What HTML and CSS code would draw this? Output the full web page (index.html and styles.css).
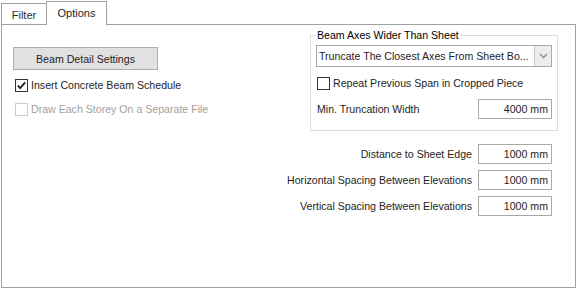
FILE: index.html
```html
<!DOCTYPE html>
<html lang="en">
<head>
  <meta charset="UTF-8" />
  <meta name="viewport" content="width=device-width, initial-scale=1.0"/>
  <title>Options</title>
  <link rel="stylesheet" href="styles.css">
</head>
<body>

  <div class="window">
    <div class="tabs">
      <div class="tab">Filter</div>
      <div class="tab active">Options</div>
    </div>

    <div class="panel">
      <div class="top">
        <div class="left-col">
          <button class="btn">Beam Detail Settings</button>
          <label class="check">
            <span class="box checked">
              <svg width="11" height="11" viewBox="0 0 11 11"><path d="M1.8 5.6 L4.2 8.2 L9.2 2.4" fill="none" stroke="#222" stroke-width="1.8"/></svg>
            </span>
            Insert Concrete Beam Schedule
          </label>
          <label class="check disabled">
            <span class="box"></span>
            Draw Each Storey On a Separate File
          </label>
        </div>

        <fieldset class="group">
          <legend>Beam Axes Wider Than Sheet</legend>
          <div class="select">
            <span class="select-text">Truncate The Closest Axes From Sheet Bo...</span>
            <span class="select-btn">
              <svg width="9" height="6" viewBox="0 0 9 6"><path d="M1 1 L4.5 4.5 L8 1" fill="none" stroke="#8a8a8a" stroke-width="1.4"/></svg>
            </span>
          </div>
          <label class="check">
            <span class="box"></span>
            Repeat Previous Span in Cropped Piece
          </label>
          <div class="row">
            <span>Min. Truncation Width</span>
            <span class="field">4000 mm</span>
          </div>
        </fieldset>
      </div>

      <div class="fields">
        <span class="label">Distance to Sheet Edge</span>
        <span class="field">1000 mm</span>
        <span class="label">Horizontal Spacing Between Elevations</span>
        <span class="field">1000 mm</span>
        <span class="label">Vertical Spacing Between Elevations</span>
        <span class="field">1000 mm</span>
      </div>
    </div>
  </div>

</body>
</html>
```

FILE: styles.css
```css
* {
  box-sizing: border-box;
}
body {
  margin: 0;
  background: #fff;
  font-family: 'Liberation Sans', Arial, sans-serif;
  font-size: 10.6px;
  color: #1e1e1e;
}

.window {
  margin-left: 1px;
  width: 575px;
}

/* Tabs */
.tabs {
  display: flex;
  align-items: flex-end;
  height: 24px;
}
.tab {
  height: 21px;
  width: 46px;
  border: 1px solid #a0a0a0;
  border-bottom: none;
  font-size: 11px;
  color: #2b2b3a;
  display: flex;
  align-items: center;
  justify-content: center;
  padding-top: 1px;
}
.tab.active {
  width: 61px;
  height: 24px;
  margin-left: -1px;
  margin-bottom: -1px;
  background: #fff;
  position: relative;
  z-index: 1;
  padding-top: 0;
  padding-bottom: 1px;
  color: #1e1e1e;
}

.panel {
  height: 264px;
  border: 1px solid #a0a0a0;
}

.top {
  display: flex;
  justify-content: space-between;
  align-items: flex-start;
  padding-top: 3px;
}

.left-col {
  padding-left: 11px;
  padding-top: 19px;
}
.btn {
  display: block;
  width: 145px;
  height: 23px;
  margin: 0 0 3px 0;
  padding: 0;
  background: #e1e1e1;
  border: 1px solid #adadad;
  font-family: inherit;
  font-size: 10.6px;
  color: #1e1e1e;
}
.left-col .check {
  margin-left: 2px;
}

.check {
  display: flex;
  align-items: center;
  height: 24px;
  gap: 3px;
}
.box {
  width: 13px;
  height: 13px;
  border: 1px solid #333;
  background: #fff;
  display: flex;
  align-items: center;
  justify-content: center;
}
.check.disabled {
  color: #a0a0a0;
}
.check.disabled .box {
  border-color: #cccccc;
}

/* Group box */
.group {
  width: 248px;
  margin: 0 17px 0 0;
  padding: 0 5px 11px 5px;
  border: 1px solid #dcdcdc;
}
.group legend {
  padding: 0 1px;
  line-height: 14px;
  color: #000;
}
.select {
  display: flex;
  height: 22px;
  margin-top: 3px;
  border: 1px solid #a9a9a9;
}
.select-text {
  flex: 1;
  padding-left: 2px;
  display: flex;
  align-items: center;
  white-space: nowrap;
  overflow: hidden;
}
.select-btn {
  width: 17px;
  border-left: 1px solid #c8c8c8;
  background: #ececec;
  display: flex;
  align-items: center;
  justify-content: center;
}
.group .check {
  margin-top: 4px;
  margin-left: 1px;
}
.row {
  display: flex;
  justify-content: space-between;
  align-items: center;
  margin-top: 4px;
  padding-left: 1px;
}

.field {
  width: 74px;
  height: 20px;
  border: 1px solid #a9a9a9;
  display: flex;
  align-items: center;
  justify-content: flex-end;
  padding-right: 3px;
}

.fields {
  display: grid;
  grid-template-columns: auto 74px;
  justify-content: end;
  align-items: center;
  column-gap: 6px;
  row-gap: 6px;
  margin-top: 13px;
  padding-right: 23px;
}
.fields .label {
  text-align: right;
}
```
